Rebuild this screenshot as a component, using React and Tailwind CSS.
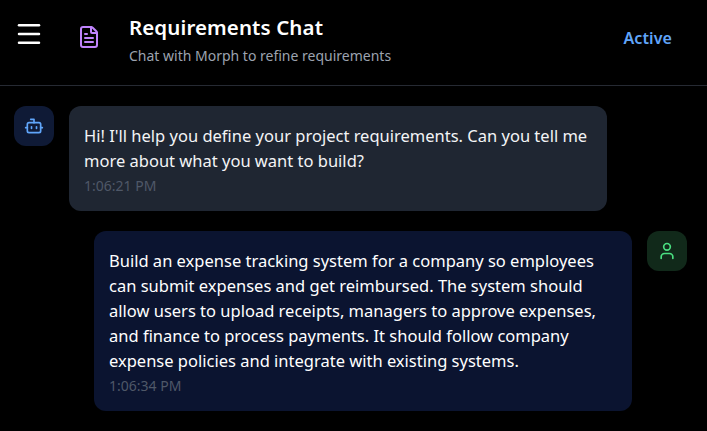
import React from 'react';
import { Menu, FileText, Bot, User } from 'lucide-react';

const font = "font-['Noto_Sans','Open_Sans',sans-serif]";

const App = () => {
  return (
    <div className={`h-[431px] w-[707px] overflow-hidden bg-black text-white ${font}`}>
      {/* Header */}
      <header className="flex h-[86px] items-start border-b border-[#262a33] pl-[14px] pr-[35px]">
        <Menu className="mt-[19px] h-[30px] w-[30px] text-white" strokeWidth={2} />
        <FileText className="ml-[33px] mt-[25px] h-6 w-6 text-[#c084fc]" strokeWidth={2} />
        <div className="ml-[28px] mt-[13px] flex-1">
          <h1 className="text-[20.5px] font-semibold leading-[28px] tracking-[0.1px]">Requirements Chat</h1>
          <p className="mt-[5px] text-[14px] leading-[20px] text-[#9ca3af]">
            Chat with Morph to refine requirements
          </p>
        </div>
        <span className="mt-[26px] text-[16px] font-semibold leading-[24px] tracking-[0.1px] text-[#60a5fa]">Active</span>
      </header>

      {/* Messages */}
      <main className="flex flex-col gap-5 pl-[14px] pr-5 pt-5">
        <div className="flex items-start gap-[15px]">
          <div className="flex h-10 w-10 shrink-0 items-center justify-center rounded-xl bg-[#0f1a36]">
            <Bot className="h-5 w-5 text-[#60a5fa]" strokeWidth={2} />
          </div>
          <div className="w-[538px] rounded-xl bg-[#1f2632] p-[15px]">
            <p className="mt-[2px] text-[16.5px] leading-[25px] text-[#f3f4f6]">
              Hi! I'll help you define your project requirements. Can you tell me more about what you want to build?
            </p>
            <span className="mt-[3px] block text-[14px] leading-[20px] text-[#4f5868]">1:06:21 PM</span>
          </div>
        </div>

        <div className="flex flex-row-reverse items-start gap-[15px]">
          <div className="flex h-10 w-10 shrink-0 items-center justify-center rounded-xl bg-[#11291a]">
            <User className="h-5 w-5 text-[#4ade80]" strokeWidth={2} />
          </div>
          <div className="w-[538px] rounded-xl bg-[#0b1430] p-[15px]">
            <p className="mt-[2px] text-[16.5px] leading-[25px] text-white">
              Build an expense tracking system for a company so employees can submit expenses and get reimbursed. The system should allow users to upload receipts, managers to approve expenses, and finance to process payments. It should follow company expense policies and integrate with existing systems.
            </p>
            <span className="mt-[3px] block text-[14px] leading-[20px] text-[#4f5868]">1:06:34 PM</span>
          </div>
        </div>
      </main>
    </div>
  );
};

export default App;
